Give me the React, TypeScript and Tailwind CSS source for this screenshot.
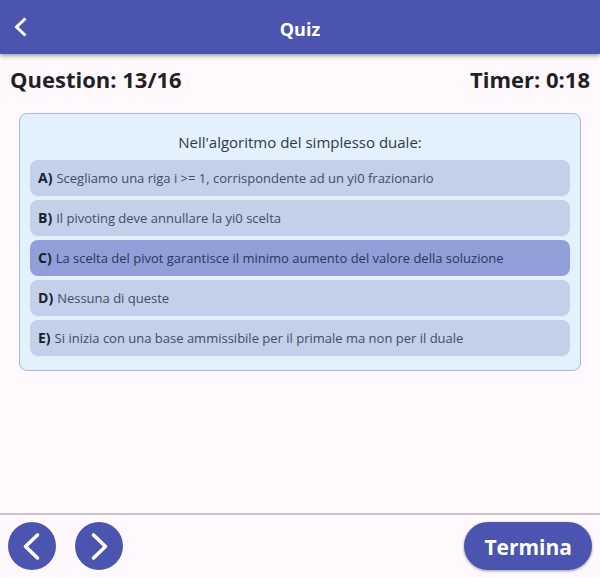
import { useState } from "react";

const options = [
  { letter: "A", text: "Scegliamo una riga i >= 1, corrispondente ad un yi0 frazionario" },
  { letter: "B", text: "Il pivoting deve annullare la yi0 scelta" },
  { letter: "C", text: "La scelta del pivot garantisce il minimo aumento del valore della soluzione" },
  { letter: "D", text: "Nessuna di queste" },
  { letter: "E", text: "Si inizia con una base ammissibile per il primale ma non per il duale" },
];

function RoundButton({ label, points }: { label: string; points: string }) {
  return (
    <button
      type="button"
      aria-label={label}
      className="flex size-12 items-center justify-center rounded-full bg-[#4b54ae] text-white"
    >
      <svg viewBox="0 0 48 48" className="size-12" fill="none" stroke="currentColor" strokeWidth="3.6" strokeLinecap="round" strokeLinejoin="round" aria-hidden="true">
        <polyline points={points} />
      </svg>
    </button>
  );
}

export default function App() {
  const [selected, setSelected] = useState("C");

  return (
    <div className="flex min-h-screen flex-col bg-[#fff9fe] font-['Open_Sans','Noto_Sans',sans-serif] text-[#231f25]">
      <header className="grid h-[54px] grid-cols-[1fr_auto_1fr] items-center bg-[#4b54ae] text-white shadow-[0_2px_4px_rgba(0,0,0,0.35)]">
        <button type="button" aria-label="Indietro" className="ml-2 flex size-7 items-center justify-center">
          <svg viewBox="0 0 28 28" className="size-7" fill="none" stroke="currentColor" strokeWidth="3" aria-hidden="true">
            <polyline points="17.5,5.5 8.5,14 17.5,22.5" />
          </svg>
        </button>
        <h1 className="pt-1 text-lg font-bold">Quiz</h1>
      </header>

      <main className="flex-1">
        <div className="flex items-center justify-between px-[10px] pt-[11px] text-[22px] leading-7 font-bold">
          <p>Question: 13/16</p>
          <p>Timer: 0:18</p>
        </div>

        <section className="mx-[19px] mt-5 rounded-lg border border-[#a9b9e0] bg-[#e2f1fb] px-[10px] pt-4 pb-[14px]">
          <h2 className="mb-[5px] text-center text-[15px] leading-[25px] text-[#2f3a48]">
            Nell'algoritmo del simplesso duale:
          </h2>
          <div className="flex flex-col gap-1">
            {options.map(({ letter, text }) => (
              <button
                key={letter}
                type="button"
                aria-pressed={selected === letter}
                onClick={() => setSelected(letter)}
                className={`flex min-h-9 items-center gap-1 rounded-lg px-2 text-left leading-5 ${
                  selected === letter ? "bg-[#919ed8] text-[#2d3560]" : "bg-[#c2d0ea] text-[#414d63]"
                }`}
              >
                <span className="text-sm font-bold text-[#17202f]">{letter})</span>
                <span className="text-[13px]">{text}</span>
              </button>
            ))}
          </div>
        </section>
      </main>

      <footer className="flex items-center justify-between border-t-2 border-[#c9c4ca] px-2 pt-[7px] pb-2">
        <div className="flex gap-[19px]">
          <RoundButton label="Domanda precedente" points="29.5,13 17.5,24.5 29.5,36" />
          <RoundButton label="Domanda successiva" points="18.5,13 30.5,24.5 18.5,36" />
        </div>
        <button
          type="button"
          className="h-12 rounded-full bg-[#4b54ae] px-5 pt-1 text-[21px] font-bold text-white shadow-[0_1px_3px_rgba(0,0,0,0.4)]"
        >
          Termina
        </button>
      </footer>
    </div>
  );
}
